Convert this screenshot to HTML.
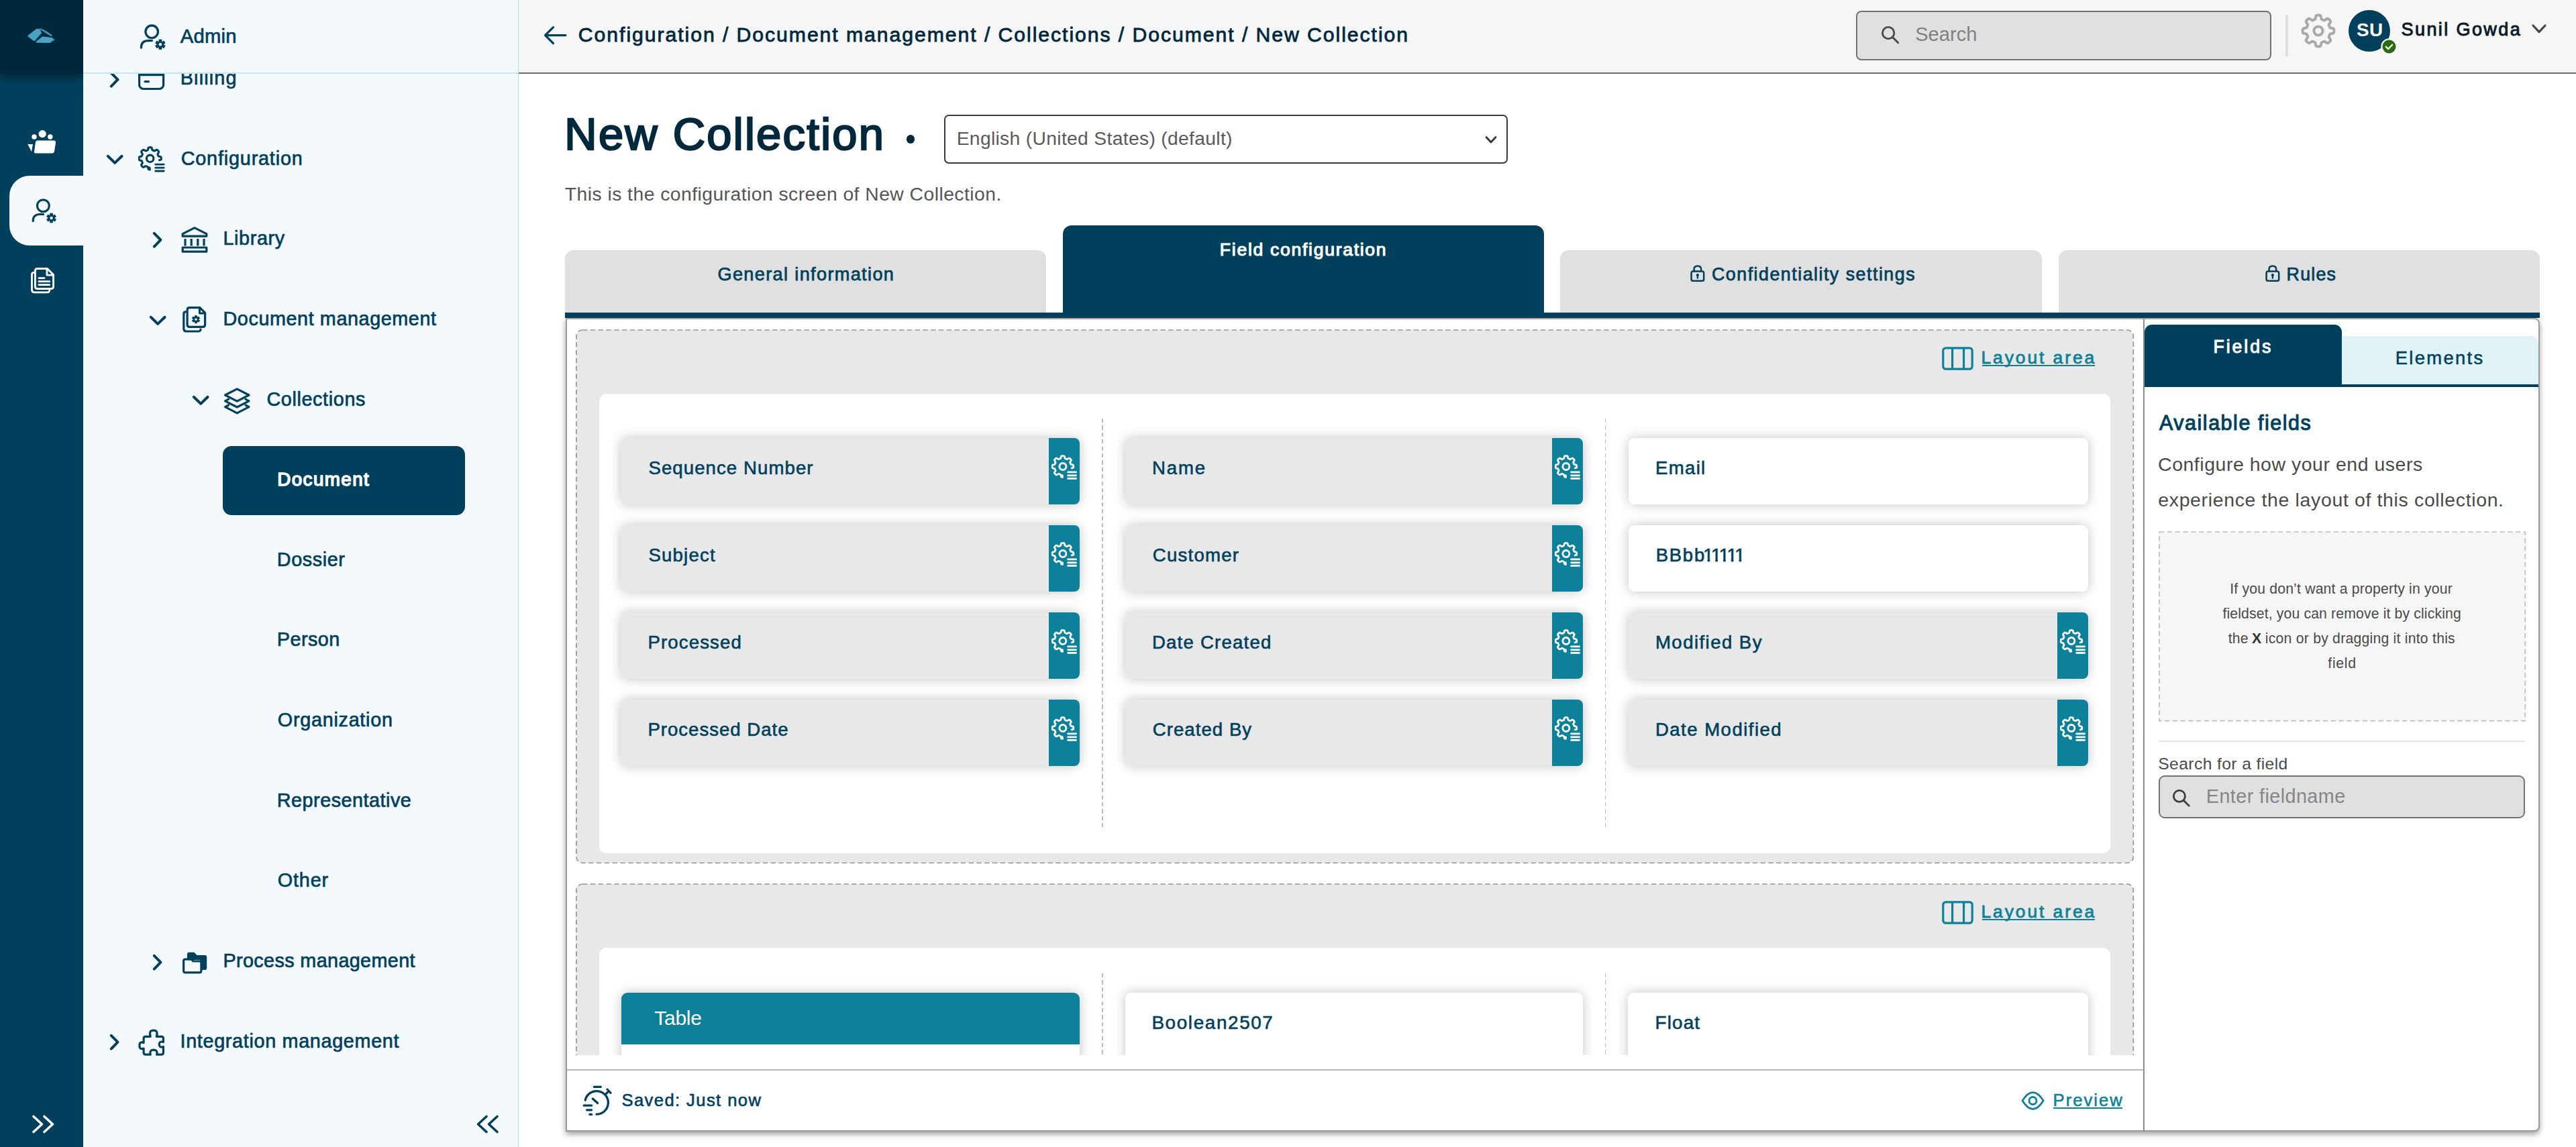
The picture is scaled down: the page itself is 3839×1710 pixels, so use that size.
<!DOCTYPE html>
<html lang="en"><head><meta charset="utf-8"><title>New Collection - Field configuration</title>
<style>
html,body{margin:0;padding:0;background:#fff;}
body{width:3839px;height:1710px;position:relative;overflow:hidden;font-family:"Liberation Sans",sans-serif;}
body div,body svg,body span.t{position:absolute;box-sizing:border-box;}
aside,nav,header,main,section{display:block;margin:0;padding:0;}
span.t{white-space:pre;display:block;}
</style></head><body>
<aside aria-label="Applications">
<div style="left:0px;top:0px;width:124px;height:1710px;background:#00405c;"></div>
<div style="left:0px;top:0px;width:124px;height:110px;background:#00283c;box-shadow:0 4px 14px rgba(0,0,0,.5);"></div>
<svg style="left:38px;top:38px;" width="48" height="30" viewBox="38 38 48 30" fill="none"><path d="M43.6,53.8 L55.9,44.4 L59.4,44.9 L61.2,49 L51.5,60 Z" fill="#317d9a" stroke="#317d9a" stroke-width="2.4" stroke-linejoin="round"/><path d="M42.6,53.6 L54.9,44 L58.2,44.5 L59.8,48.8 L50.3,59.6 Z" fill="#4aa3c3" stroke="#4aa3c3" stroke-width="2.4" stroke-linejoin="round"/><path d="M55.6,62.8 L64.4,55.6 L78,57.4 L80.6,59 L75,63 Z" fill="#317d9a" stroke="#317d9a" stroke-width="2" stroke-linejoin="round"/><path d="M54.6,62.6 L63.8,55.4 L76.8,57 L78.6,58.8 L73.6,62.8 Z" fill="#4aa3c3" stroke="#4aa3c3" stroke-width="2" stroke-linejoin="round"/><path d="M59.1,42 Q69,45.4 78,53 Q77.2,54.6 75,53.5 Q66.5,48.8 59.7,43.6 Z" fill="#4aa3c3"/><path d="M61,44.2 Q68.5,48 76.6,53.9" stroke="#317d9a" stroke-width="0.9" fill="none"/></svg>
<div style="left:14px;top:262px;width:110px;height:104px;background:#f4f9fd;border-radius:30px 0 0 30px;"></div>
<svg style="left:40px;top:192px;" width="46" height="40" viewBox="0 0 46 40" fill="none"><circle cx="23.2" cy="7.6" r="5.6" fill="#fff"/><circle cx="11" cy="12" r="3.7" fill="#fff"/><circle cx="34.8" cy="12" r="3.7" fill="#fff"/><path d="M15,17.5 H40 Q43.5,17.5 43,21 L41,33.5 Q40.5,36.5 37.5,36.5 H13 Q10.5,36.5 11,34 L13,20 Q13.5,17.5 15,17.5Z" fill="#fff"/><path d="M1.2,23 H9 L7,34 Z" fill="#fff"/></svg>
<svg style="left:45px;top:294.2px;" width="40.3" height="40.3" viewBox="0 0 42 42" fill="none"><circle cx="20.2" cy="13.3" r="9.3" stroke="#00405c" stroke-width="3.3"/><path d="M4.4,37 C4.4,30 8.2,26.6 15,26.6 L20.5,26.6" stroke="#00405c" stroke-width="3.3" stroke-linecap="round"/><line x1="32.90" y1="24.70" x2="32.90" y2="39.90" stroke="#00405c" stroke-width="4.71"/><line x1="39.48" y1="28.50" x2="26.32" y2="36.10" stroke="#00405c" stroke-width="4.71"/><line x1="39.48" y1="36.10" x2="26.32" y2="28.50" stroke="#00405c" stroke-width="4.71"/><circle cx="32.9" cy="32.3" r="5.17" fill="#00405c"/><circle cx="32.9" cy="32.3" r="2.28" fill="#f4f9fd"/></svg>
<svg style="left:43.8px;top:397.4px;" width="40.4" height="42.3" viewBox="0 0 42 44" fill="none"><path d="M12,3.6 H27.5 L37,13 V31.5 Q37,34.8 33.7,34.8 H12 Q8.7,34.8 8.7,31.5 V7 Q8.7,3.6 12,3.6Z" stroke="#fff" stroke-width="3"/><path d="M27,4.2 V13.6 H36.4" stroke="#fff" stroke-width="3" stroke-linejoin="round"/><path d="M6.4,9.6 Q3.6,9.8 3.6,13 V36.5 Q3.6,40.4 7.5,40.4 H27.6 Q30.6,40.4 30.9,37.4" stroke="#fff" stroke-width="3" stroke-linecap="round"/><path d="M14.5,18.3 H23 M14.5,23.6 H31 M14.5,28.8 H31" stroke="#fff" stroke-width="2.8" stroke-linecap="round"/></svg>
<svg style="left:44.8px;top:1659.6px;" width="40" height="32" viewBox="0 0 40 32" fill="none"><path d="M5,4.5 L17.5,16 L5,27.5 M21,4.5 L33.5,16 L21,27.5" stroke="#fff" stroke-width="3.6" stroke-linecap="round" stroke-linejoin="round"/></svg>
</aside>
<nav aria-label="Admin">
<div style="left:124px;top:0px;width:648.6px;height:1710px;background:#f4f9fd;border-right:1.7px solid #cad3d9;"></div>
<div style="left:124px;top:110px;width:648px;height:1600px;overflow:hidden;"><div style="left:-124px;top:-110px;width:900px;height:1710px;">
<svg style="left:161.4px;top:103.975px;" width="19.8" height="29.4" viewBox="-3 -3 19.8 29.4" fill="none"><path d="M1.8,1.8 L11.46,11.7 L1.8,21.599999999999998" stroke="#00405c" stroke-width="4.0" stroke-linecap="round" stroke-linejoin="round"/></svg>
<svg style="left:204px;top:101.375px;" width="44" height="36" viewBox="0 0 44 36" fill="none"><rect x="3.6" y="2" width="36" height="29.5" rx="6" stroke="#00405c" stroke-width="3.2"/><path d="M3.6,10.6 H39.6" stroke="#00405c" stroke-width="3.2"/><path d="M12,20.6 H17.5" stroke="#00405c" stroke-width="3.2" stroke-linecap="round"/></svg>
<span class="t" style="left:268.79px;top:100px;font-size:28.78px;line-height:32px;color:#00405c;letter-spacing:1.156px;-webkit-text-stroke:0.7px #00405c;">Billing</span>
<svg style="left:155.8px;top:227.8px;" width="30.4" height="20.2" viewBox="-3 -3 30.4 20.2" fill="none"><path d="M1.8,1.8 L12.2,11.86 L22.599999999999998,1.8" stroke="#00405c" stroke-width="4.0" stroke-linecap="round" stroke-linejoin="round"/></svg>
<svg style="left:206px;top:217.6px;" width="41.8" height="41.8" viewBox="0 0 40 40" fill="none"><path d="M16.21,30.58 L16.62,33.40 L15.93,33.35 L15.25,33.22 L14.61,32.80 L14.18,31.50 L13.89,30.03 L13.48,29.44 L12.99,29.19 L12.49,28.99 L11.99,28.78 L11.50,28.57 L10.99,28.39 L10.34,28.42 L9.21,29.12 L7.90,29.89 L7.08,29.85 L6.48,29.48 L5.96,29.03 L5.46,28.54 L5.00,28.02 L4.61,27.45 L4.47,26.70 L5.07,25.48 L5.91,24.23 L6.04,23.52 L5.87,23.00 L5.66,22.50 L5.45,22.01 L5.25,21.51 L5.02,21.02 L4.54,20.58 L3.24,20.28 L1.78,19.90 L1.22,19.29 L1.06,18.61 L1.01,17.92 L1.00,17.22 L1.05,16.53 L1.18,15.85 L1.60,15.21 L2.90,14.78 L4.37,14.49 L4.96,14.08 L5.21,13.59 L5.41,13.09 L5.62,12.59 L5.83,12.10 L6.01,11.59 L5.98,10.94 L5.28,9.81 L4.51,8.50 L4.55,7.68 L4.92,7.08 L5.37,6.56 L5.86,6.06 L6.38,5.60 L6.95,5.21 L7.70,5.07 L8.92,5.67 L10.17,6.51 L10.88,6.64 L11.40,6.47 L11.90,6.26 L12.39,6.05 L12.89,5.85 L13.38,5.62 L13.82,5.14 L14.12,3.84 L14.50,2.38 L15.11,1.82 L15.79,1.66 L16.48,1.61 L17.18,1.60 L17.87,1.65 L18.55,1.78 L19.19,2.20 L19.62,3.50 L19.91,4.97 L20.32,5.56 L20.81,5.81 L21.31,6.01 L21.81,6.22 L22.30,6.43 L22.81,6.61 L23.46,6.58 L24.59,5.88 L25.90,5.11 L26.72,5.15 L27.32,5.52 L27.84,5.97 L28.34,6.46 L28.80,6.98 L29.19,7.55 L29.33,8.30 L28.73,9.52 L27.89,10.77 L27.76,11.48 L27.93,12.00 L28.14,12.50 L28.35,12.99 L28.55,13.49 L28.78,13.98 L29.26,14.42 L30.56,14.72 L32.02,15.10 L32.58,15.71 L32.74,16.39 L32.79,17.08 L32.80,17.78 L32.75,18.47 L32.62,19.15 L30.19,19.84" stroke="#00405c" stroke-width="3.0" stroke-linejoin="round" stroke-linecap="round"/><circle cx="16.9" cy="17.5" r="5" stroke="#00405c" stroke-width="3.0"/><path d="M24.6,25.9H36.6 M24.6,30.8H36.6 M24.6,35.4H36.6" stroke="#00405c" stroke-width="2.7" stroke-linecap="round"/></svg>
<span class="t" style="left:269.69px;top:220px;font-size:28.78px;line-height:32px;color:#00405c;letter-spacing:0.829px;-webkit-text-stroke:0.7px #00405c;">Configuration</span>
<svg style="left:225.3px;top:343.2px;" width="19.8" height="29.4" viewBox="-3 -3 19.8 29.4" fill="none"><path d="M1.8,1.8 L11.46,11.7 L1.8,21.599999999999998" stroke="#00405c" stroke-width="4.0" stroke-linecap="round" stroke-linejoin="round"/></svg>
<svg style="left:269px;top:337px;" width="42" height="41" viewBox="0 0 42 41" fill="none"><path d="M3.2,15.2 V11.6 L21,2.6 L38.8,11.6 V15.2 Z" stroke="#00405c" stroke-width="3.2" stroke-linejoin="round"/><path d="M7,19 V29.5 M16.2,19 V29.5 M25.8,19 V29.5 M35,19 V29.5" stroke="#00405c" stroke-width="3.2"/><rect x="3.2" y="32" width="35.6" height="6.2" stroke="#00405c" stroke-width="3.2" stroke-linejoin="round"/></svg>
<span class="t" style="left:332.49px;top:339px;font-size:28.78px;line-height:32px;color:#00405c;letter-spacing:0.625px;-webkit-text-stroke:0.7px #00405c;">Library</span>
<svg style="left:219.6px;top:467.6px;" width="30.4" height="20.2" viewBox="-3 -3 30.4 20.2" fill="none"><path d="M1.8,1.8 L12.2,11.86 L22.599999999999998,1.8" stroke="#00405c" stroke-width="4.0" stroke-linecap="round" stroke-linejoin="round"/></svg>
<svg style="left:270px;top:455px;" width="40" height="43" viewBox="0 0 40 43" fill="none"><path d="M12.5,3.6 H27.8 L35.6,11.4 V29 Q35.6,32.4 32.2,32.4 H12.5 Q9.1,32.4 9.1,29 V7 Q9.1,3.6 12.5,3.6Z" stroke="#00405c" stroke-width="3.2"/><path d="M27.4,4 V12 H35.2" stroke="#00405c" stroke-width="3" stroke-linejoin="round"/><path d="M6.4,9.8 Q3.8,10 3.8,13 V35 Q3.8,39 7.8,39 H25.6 Q28.8,39 29,36" stroke="#00405c" stroke-width="3.2" stroke-linecap="round"/><line x1="22.00" y1="15.20" x2="22.00" y2="27.20" stroke="#00405c" stroke-width="3.72"/><line x1="27.20" y1="18.20" x2="16.80" y2="24.20" stroke="#00405c" stroke-width="3.72"/><line x1="27.20" y1="24.20" x2="16.80" y2="18.20" stroke="#00405c" stroke-width="3.72"/><circle cx="22" cy="21.2" r="4.08" fill="#00405c"/><circle cx="22" cy="21.2" r="1.80" fill="#f4f9fd"/></svg>
<span class="t" style="left:332.49px;top:459px;font-size:28.78px;line-height:32px;color:#00405c;letter-spacing:0.585px;-webkit-text-stroke:0.7px #00405c;">Document management</span>
<svg style="left:283.6px;top:587.2px;" width="30.4" height="20.2" viewBox="-3 -3 30.4 20.2" fill="none"><path d="M1.8,1.8 L12.2,11.86 L22.599999999999998,1.8" stroke="#00405c" stroke-width="4.0" stroke-linecap="round" stroke-linejoin="round"/></svg>
<svg style="left:332px;top:576px;" width="43" height="43" viewBox="0 0 43 43" fill="none"><path d="M3.5,13 L21.3,3.8 L39,13 L21.3,22.2 Z" stroke="#00405c" stroke-width="3.2" stroke-linejoin="round"/><path d="M8.5,19.2 L3.5,21.8 L21.3,31 L39,21.8 L34,19.2" stroke="#00405c" stroke-width="3.2" stroke-linejoin="round" stroke-linecap="round"/><path d="M8.5,28 L3.5,30.6 L21.3,39.8 L39,30.6 L34,28" stroke="#00405c" stroke-width="3.2" stroke-linejoin="round" stroke-linecap="round"/></svg>
<span class="t" style="left:397.39px;top:579px;font-size:28.78px;line-height:32px;color:#00405c;letter-spacing:0.634px;-webkit-text-stroke:0.7px #00405c;">Collections</span>
<div style="left:332px;top:665px;width:360.5px;height:102.5px;background:#00405c;border-radius:13px;"></div>
<span class="t" style="left:413.27px;top:699px;font-size:27.76px;line-height:31px;color:#fff;letter-spacing:1.422px;-webkit-text-stroke:1.5px #fff;">Document</span>
<span class="t" style="left:412.79px;top:818px;font-size:28.78px;line-height:32px;color:#00405c;letter-spacing:0.598px;-webkit-text-stroke:0.7px #00405c;">Dossier</span>
<span class="t" style="left:412.79px;top:937px;font-size:28.78px;line-height:32px;color:#00405c;letter-spacing:0.469px;-webkit-text-stroke:0.7px #00405c;">Person</span>
<span class="t" style="left:413.79px;top:1057px;font-size:28.78px;line-height:32px;color:#00405c;letter-spacing:0.732px;-webkit-text-stroke:0.7px #00405c;">Organization</span>
<span class="t" style="left:412.79px;top:1177px;font-size:28.78px;line-height:32px;color:#00405c;letter-spacing:0.505px;-webkit-text-stroke:0.7px #00405c;">Representative</span>
<span class="t" style="left:413.79px;top:1296px;font-size:28.78px;line-height:32px;color:#00405c;letter-spacing:0.841px;-webkit-text-stroke:0.7px #00405c;">Other</span>
<svg style="left:225.3px;top:1419.85px;" width="19.8" height="29.4" viewBox="-3 -3 19.8 29.4" fill="none"><path d="M1.8,1.8 L11.46,11.7 L1.8,21.599999999999998" stroke="#00405c" stroke-width="4.0" stroke-linecap="round" stroke-linejoin="round"/></svg>
<svg style="left:271.75px;top:1419.25px;" width="38" height="34" viewBox="0 0 38 34" fill="none"><path d="M7,3.4 Q7,0.8 9.6,0.8 H17.4 L21.4,5 H33.4 Q36.2,5 36.2,7.8 V24 Q36.2,26.9 33.4,26.9 H26 V12 H7 Z" fill="#00405c"/><path d="M4.2,11.2 H13 L16,14 H25.4 Q27.9,14 27.9,16.5 V28.4 Q27.9,30.9 25.4,30.9 H4.1 Q1.6,30.9 1.6,28.4 V13.7 Q1.6,11.2 4.1,11.2Z" fill="#f4f9fd" stroke="#00405c" stroke-width="3.2" stroke-linejoin="round"/></svg>
<span class="t" style="left:332.49px;top:1416px;font-size:28.78px;line-height:32px;color:#00405c;letter-spacing:0.367px;-webkit-text-stroke:0.7px #00405c;">Process management</span>
<svg style="left:161.4px;top:1539.475px;" width="19.8" height="29.4" viewBox="-3 -3 19.8 29.4" fill="none"><path d="M1.8,1.8 L11.46,11.7 L1.8,21.599999999999998" stroke="#00405c" stroke-width="4.0" stroke-linecap="round" stroke-linejoin="round"/></svg>
<svg style="left:204px;top:1533px;" width="44" height="44" viewBox="0 0 44 44" fill="none"><path d="M13,12.35 H20.2 Q17.4,3.1 24.75,3.1 Q32.1,3.1 29.3,12.35 H36.6 Q39.4,12.35 39.4,15.2 V20.6 Q33.4,18.4 33.2,24 Q33.4,29.6 39.4,27.4 V36.3 Q39.4,39.15 36.6,39.15 H29.6 Q31.6,32.4 24.9,32.2 Q18.2,32.4 20.2,39.15 H13 Q10.1,39.15 10.1,36.3 V30 Q3.85,32.4 3.85,25.8 Q3.85,19.2 10.1,21.6 V15.2 Q10.1,12.35 13,12.35Z" stroke="#00405c" stroke-width="3.2" stroke-linejoin="round"/></svg>
<span class="t" style="left:268.49px;top:1536px;font-size:28.78px;line-height:32px;color:#00405c;letter-spacing:0.676px;-webkit-text-stroke:0.7px #00405c;">Integration management</span>
<svg style="left:705.6px;top:1659.6px;" width="40" height="32" viewBox="0 0 40 32" fill="none"><path d="M19,4.5 L6.5,16 L19,27.5 M35,4.5 L22.5,16 L35,27.5" stroke="#00405c" stroke-width="3.6" stroke-linecap="round" stroke-linejoin="round"/></svg>
</div></div>
<div style="left:124px;top:108px;width:648px;height:2px;background:#c4e7ee;"></div>
<svg style="left:205.6px;top:34px;" width="42" height="42" viewBox="0 0 42 42" fill="none"><circle cx="20.2" cy="13.3" r="9.3" stroke="#00405c" stroke-width="3.3"/><path d="M4.4,37 C4.4,30 8.2,26.6 15,26.6 L20.5,26.6" stroke="#00405c" stroke-width="3.3" stroke-linecap="round"/><line x1="32.90" y1="24.70" x2="32.90" y2="39.90" stroke="#00405c" stroke-width="4.71"/><line x1="39.48" y1="28.50" x2="26.32" y2="36.10" stroke="#00405c" stroke-width="4.71"/><line x1="39.48" y1="36.10" x2="26.32" y2="28.50" stroke="#00405c" stroke-width="4.71"/><circle cx="32.9" cy="32.3" r="5.17" fill="#00405c"/><circle cx="32.9" cy="32.3" r="2.28" fill="#f4f9fd"/></svg>
<span class="t" style="left:268.79px;top:38px;font-size:29.22px;line-height:32px;color:#00405c;letter-spacing:0.236px;-webkit-text-stroke:0.7px #00405c;">Admin</span>
</nav>
<header>
<div style="left:772.6px;top:0px;width:3067px;height:110px;background:#f6f6f6;border-bottom:2px solid #6e6e6e;"></div>
<svg style="left:808px;top:36px;" width="40" height="34" viewBox="0 0 40 34" fill="none"><path d="M4.5,16.6 H35 M16.5,4.6 L4.5,16.6 L16.5,28.6" stroke="#00405c" stroke-width="3.2" stroke-linecap="round" stroke-linejoin="round"/></svg>
<span class="t" style="left:861.86px;top:35px;font-size:30.23px;line-height:33px;color:#00283d;letter-spacing:1.923px;-webkit-text-stroke:0.8px #00283d;">Configuration / Document management / Collections / Document / New Collection</span>
<div style="left:2766px;top:16px;width:618.5px;height:73.5px;background:#e0e0e0;border:2px solid #727272;border-radius:8px;"></div>
<svg style="left:2802.6px;top:38.4px;" width="27.6" height="27.6" viewBox="0 0 26 26" fill="none"><circle cx="10.5" cy="10.5" r="8.2" stroke="#4a4a4a" stroke-width="2.7"/><path d="M16.6,16.6 L24.3,24.3" stroke="#4a4a4a" stroke-width="2.7" stroke-linecap="round"/></svg>
<span class="t" style="left:2854.18px;top:35px;font-size:29.07px;line-height:32px;color:#808080;letter-spacing:0.020px;">Search</span>
<div style="left:3406px;top:22px;width:4px;height:62px;background:#dcdcdc;"></div>
<svg style="left:3429px;top:20px;" width="52" height="52" viewBox="0 0 52 52" fill="none"><path d="M49.40,26.00 L49.37,27.02 L49.24,28.03 L48.84,29.01 L47.47,29.79 L44.94,30.20 L43.54,30.70 L43.05,31.37 L42.74,32.09 L42.45,32.81 L42.14,33.53 L41.85,34.25 L41.73,35.08 L42.36,36.42 L43.86,38.50 L44.28,40.03 L43.87,40.99 L43.24,41.80 L42.55,42.55 L41.80,43.24 L40.99,43.87 L40.03,44.28 L38.50,43.86 L36.42,42.36 L35.08,41.73 L34.25,41.85 L33.53,42.14 L32.81,42.45 L32.09,42.74 L31.37,43.05 L30.70,43.54 L30.20,44.94 L29.79,47.47 L29.01,48.84 L28.03,49.24 L27.02,49.37 L26.00,49.40 L24.98,49.37 L23.97,49.24 L22.99,48.84 L22.21,47.47 L21.80,44.94 L21.30,43.54 L20.63,43.05 L19.91,42.74 L19.19,42.45 L18.47,42.14 L17.75,41.85 L16.92,41.73 L15.58,42.36 L13.50,43.86 L11.97,44.28 L11.01,43.87 L10.20,43.24 L9.45,42.55 L8.76,41.80 L8.13,40.99 L7.72,40.03 L8.14,38.50 L9.64,36.42 L10.27,35.08 L10.15,34.25 L9.86,33.53 L9.55,32.81 L9.26,32.09 L8.95,31.37 L8.46,30.70 L7.06,30.20 L4.53,29.79 L3.16,29.01 L2.76,28.03 L2.63,27.02 L2.60,26.00 L2.63,24.98 L2.76,23.97 L3.16,22.99 L4.53,22.21 L7.06,21.80 L8.46,21.30 L8.95,20.63 L9.26,19.91 L9.55,19.19 L9.86,18.47 L10.15,17.75 L10.27,16.92 L9.64,15.58 L8.14,13.50 L7.72,11.97 L8.13,11.01 L8.76,10.20 L9.45,9.45 L10.20,8.76 L11.01,8.13 L11.97,7.72 L13.50,8.14 L15.58,9.64 L16.92,10.27 L17.75,10.15 L18.47,9.86 L19.19,9.55 L19.91,9.26 L20.63,8.95 L21.30,8.46 L21.80,7.06 L22.21,4.53 L22.99,3.16 L23.97,2.76 L24.98,2.63 L26.00,2.60 L27.02,2.63 L28.03,2.76 L29.01,3.16 L29.79,4.53 L30.20,7.06 L30.70,8.46 L31.37,8.95 L32.09,9.26 L32.81,9.55 L33.53,9.86 L34.25,10.15 L35.08,10.27 L36.42,9.64 L38.50,8.14 L40.03,7.72 L40.99,8.13 L41.80,8.76 L42.55,9.45 L43.24,10.20 L43.87,11.01 L44.28,11.97 L43.86,13.50 L42.36,15.58 L41.73,16.92 L41.85,17.75 L42.14,18.47 L42.45,19.19 L42.74,19.91 L43.05,20.63 L43.54,21.30 L44.94,21.80 L47.47,22.21 L48.84,22.99 L49.24,23.97 L49.37,24.98Z" stroke="#a9a9a9" stroke-width="4" stroke-linejoin="round"/><circle cx="26" cy="26" r="6.6" stroke="#a9a9a9" stroke-width="4"/></svg>
<div style="left:3499.8px;top:14.6px;width:62.2px;height:62.2px;background:#00405c;border-radius:50%;"></div>
<span class="t" style="left:3512.10px;top:29px;font-size:27.91px;line-height:31px;color:#fff;font-weight:700;letter-spacing:0.340px;">SU</span>
<svg style="left:3547px;top:56px;" width="27" height="27" viewBox="0 0 27 27" fill="none"><circle cx="13.5" cy="13.5" r="12.2" fill="#f6f6f6"/><circle cx="13.5" cy="13.5" r="10" fill="#2b6a0e"/><path d="M8.8,13.6 L12.2,17 L18.2,10.8" stroke="#fff" stroke-width="2.3" stroke-linecap="round" stroke-linejoin="round"/></svg>
<span class="t" style="left:3578.54px;top:28px;font-size:27.11px;line-height:31px;color:#0b1b26;letter-spacing:2.358px;-webkit-text-stroke:0.95px #0b1b26;">Sunil Gowda</span>
<svg style="left:3771px;top:33px;" width="26" height="22" viewBox="0 0 26 22" fill="none"><path d="M4,5 L13,14.6 L22,5" stroke="#444" stroke-width="3.2" stroke-linecap="round" stroke-linejoin="round"/></svg>
</header>
<main>
<span class="t" style="left:841.32px;top:162px;font-size:66.86px;line-height:75px;color:#00283d;letter-spacing:2.285px;-webkit-text-stroke:2.4px #00283d;">New Collection</span>
<div style="left:1350.5px;top:201.2px;width:12.6px;height:12.6px;background:#00283d;border-radius:50%;"></div>
<div style="left:1407.2px;top:171.2px;width:840.3px;height:73.2px;background:#fff;border:2px solid #3a3a3a;border-radius:7px;"></div>
<span class="t" style="left:1425.67px;top:190px;font-size:28.34px;line-height:32px;color:#5a5a5a;letter-spacing:0.293px;">English (United States) (default)</span>
<svg style="left:2210px;top:200px;" width="24" height="18" viewBox="0 0 24 18" fill="none"><path d="M5,4.5 L12,12 L19,4.5" stroke="#333" stroke-width="2.8" stroke-linecap="round" stroke-linejoin="round"/></svg>
<span class="t" style="left:841.86px;top:273px;font-size:28.34px;line-height:32px;color:#555;letter-spacing:0.443px;">This is the configuration screen of New Collection.</span>
<div style="left:842px;top:372.5px;width:717px;height:94px;background:#e0e0e0;border-radius:13px 13px 0 0;"></div>
<div style="left:2325px;top:372.5px;width:717.5px;height:94px;background:#e0e0e0;border-radius:13px 13px 0 0;"></div>
<div style="left:3067.5px;top:372.5px;width:717.5px;height:94px;background:#e0e0e0;border-radius:13px 13px 0 0;"></div>
<div style="left:1584px;top:336px;width:716.5px;height:132px;background:#00405c;border-radius:13px 13px 0 0;"></div>
<div style="left:842px;top:465.6px;width:2943px;height:8.4px;background:#00405c;"></div>
<span class="t" style="left:1069.51px;top:393px;font-size:27.11px;line-height:31px;color:#00405c;letter-spacing:1.350px;-webkit-text-stroke:0.75px #00405c;">General information</span>
<span class="t" style="left:1817.87px;top:357px;font-size:26.60px;line-height:30px;color:#fff;letter-spacing:1.692px;-webkit-text-stroke:1.1px #fff;">Field configuration</span>
<svg style="left:2517.6px;top:393.6px;" width="24" height="27" viewBox="0 0 24 27" fill="none"><rect x="2.6" y="10.4" width="18.6" height="14.4" rx="2.6" stroke="#00405c" stroke-width="2.5"/><path d="M6.6,10.2 V7.4 Q6.6,2.4 11.9,2.4 Q17.2,2.4 17.2,7.4 V10.2" stroke="#00405c" stroke-width="2.5"/><circle cx="11.9" cy="16" r="2.1" fill="#00405c"/><path d="M11.9,16 V20.6" stroke="#00405c" stroke-width="2.4" stroke-linecap="round"/></svg>
<span class="t" style="left:2551.01px;top:394px;font-size:26.82px;line-height:30px;color:#00405c;letter-spacing:1.490px;-webkit-text-stroke:0.75px #00405c;">Confidentiality settings</span>
<svg style="left:3375.2px;top:393.6px;" width="24" height="27" viewBox="0 0 24 27" fill="none"><rect x="2.6" y="10.4" width="18.6" height="14.4" rx="2.6" stroke="#00405c" stroke-width="2.5"/><path d="M6.6,10.2 V7.4 Q6.6,2.4 11.9,2.4 Q17.2,2.4 17.2,7.4 V10.2" stroke="#00405c" stroke-width="2.5"/><circle cx="11.9" cy="16" r="2.1" fill="#00405c"/><path d="M11.9,16 V20.6" stroke="#00405c" stroke-width="2.4" stroke-linecap="round"/></svg>
<span class="t" style="left:3407.58px;top:394px;font-size:26.82px;line-height:30px;color:#00405c;letter-spacing:1.214px;-webkit-text-stroke:0.75px #00405c;">Rules</span>
<div style="left:843px;top:474px;width:2942px;height:1213.3px;background:#fff;border:2px solid #9a9a9a;border-top:2px solid #a0a0a0;border-radius:0 8px 8px 0;box-shadow:0 4px 9px rgba(0,0,0,.38);"></div>
<div style="left:845px;top:476px;width:2349px;height:1096.5px;overflow:hidden;"><div style="left:-845px;top:-476px;width:3839px;height:2400px;">
<svg style="left:856.5px;top:489.5px;" width="2324.3" height="798.5" viewBox="-2 -2 2324.3 798.5" fill="none"><rect x="0" y="0" width="2320.3" height="794.5" rx="9" fill="#e8e8e8" stroke="#959595" stroke-width="1.7" stroke-dasharray="7.4 4.4"/></svg>
<div style="left:893px;top:586.5px;width:2251.5px;height:685.5px;background:#fff;border-radius:11px;"></div>
<svg style="left:2892px;top:514.5px;" width="52" height="40" viewBox="0 0 52 40" fill="none"><rect x="3.8" y="3.8" width="43.4" height="31.4" rx="4" stroke="#0e819a" stroke-width="3.2"/><path d="M17.6,4 V35 M34.6,4 V35" stroke="#0e819a" stroke-width="3.2"/></svg>
<span class="t" style="left:2952.43px;top:518px;font-size:26.45px;line-height:30px;color:#0e819a;letter-spacing:2.915px;-webkit-text-stroke:0.8px #0e819a;">Layout area</span>
<div style="left:2954.2px;top:543.7px;width:167.8px;height:2.5px;background:#0e819a;"></div>
<div style="left:1642.25px;top:623.5px;width:1.7px;height:611px;background:repeating-linear-gradient(to bottom,#bcbcbc 0,#bcbcbc 6.2px,transparent 6.2px,transparent 10.4px);"></div>
<div style="left:2391.7500000000005px;top:623.5px;width:1.7px;height:611px;background:repeating-linear-gradient(to bottom,#bcbcbc 0,#bcbcbc 6.2px,transparent 6.2px,transparent 10.4px);"></div>
<div style="left:925px;top:653px;width:684px;height:99px;background:#e8e8e8;border-radius:9px;box-shadow:0 0 18px rgba(0,0,0,.24);"></div>
<div style="left:1563px;top:653px;width:46px;height:99px;background:#0e819a;border-radius:0 8px 8px 0;"></div>
<svg style="left:1567.2px;top:678px;" width="40.0" height="40.0" viewBox="0 0 40 40" fill="none"><path d="M16.21,30.58 L16.62,33.40 L15.93,33.35 L15.25,33.22 L14.61,32.80 L14.18,31.50 L13.89,30.03 L13.48,29.44 L12.99,29.19 L12.49,28.99 L11.99,28.78 L11.50,28.57 L10.99,28.39 L10.34,28.42 L9.21,29.12 L7.90,29.89 L7.08,29.85 L6.48,29.48 L5.96,29.03 L5.46,28.54 L5.00,28.02 L4.61,27.45 L4.47,26.70 L5.07,25.48 L5.91,24.23 L6.04,23.52 L5.87,23.00 L5.66,22.50 L5.45,22.01 L5.25,21.51 L5.02,21.02 L4.54,20.58 L3.24,20.28 L1.78,19.90 L1.22,19.29 L1.06,18.61 L1.01,17.92 L1.00,17.22 L1.05,16.53 L1.18,15.85 L1.60,15.21 L2.90,14.78 L4.37,14.49 L4.96,14.08 L5.21,13.59 L5.41,13.09 L5.62,12.59 L5.83,12.10 L6.01,11.59 L5.98,10.94 L5.28,9.81 L4.51,8.50 L4.55,7.68 L4.92,7.08 L5.37,6.56 L5.86,6.06 L6.38,5.60 L6.95,5.21 L7.70,5.07 L8.92,5.67 L10.17,6.51 L10.88,6.64 L11.40,6.47 L11.90,6.26 L12.39,6.05 L12.89,5.85 L13.38,5.62 L13.82,5.14 L14.12,3.84 L14.50,2.38 L15.11,1.82 L15.79,1.66 L16.48,1.61 L17.18,1.60 L17.87,1.65 L18.55,1.78 L19.19,2.20 L19.62,3.50 L19.91,4.97 L20.32,5.56 L20.81,5.81 L21.31,6.01 L21.81,6.22 L22.30,6.43 L22.81,6.61 L23.46,6.58 L24.59,5.88 L25.90,5.11 L26.72,5.15 L27.32,5.52 L27.84,5.97 L28.34,6.46 L28.80,6.98 L29.19,7.55 L29.33,8.30 L28.73,9.52 L27.89,10.77 L27.76,11.48 L27.93,12.00 L28.14,12.50 L28.35,12.99 L28.55,13.49 L28.78,13.98 L29.26,14.42 L30.56,14.72 L32.02,15.10 L32.58,15.71 L32.74,16.39 L32.79,17.08 L32.80,17.78 L32.75,18.47 L32.62,19.15 L30.19,19.84" stroke="#fff" stroke-width="2.8" stroke-linejoin="round" stroke-linecap="round"/><circle cx="16.9" cy="17.5" r="5" stroke="#fff" stroke-width="2.8"/><path d="M24.6,25.9H36.6 M24.6,30.8H36.6 M24.6,35.4H36.6" stroke="#fff" stroke-width="2.7" stroke-linecap="round"/></svg>
<span class="t" style="left:966.45px;top:682px;font-size:27.62px;line-height:31px;color:#00405c;letter-spacing:1.060px;-webkit-text-stroke:0.6px #00405c;">Sequence Number</span>
<div style="left:925px;top:783px;width:684px;height:99px;background:#e8e8e8;border-radius:9px;box-shadow:0 0 18px rgba(0,0,0,.24);"></div>
<div style="left:1563px;top:783px;width:46px;height:99px;background:#0e819a;border-radius:0 8px 8px 0;"></div>
<svg style="left:1567.2px;top:808px;" width="40.0" height="40.0" viewBox="0 0 40 40" fill="none"><path d="M16.21,30.58 L16.62,33.40 L15.93,33.35 L15.25,33.22 L14.61,32.80 L14.18,31.50 L13.89,30.03 L13.48,29.44 L12.99,29.19 L12.49,28.99 L11.99,28.78 L11.50,28.57 L10.99,28.39 L10.34,28.42 L9.21,29.12 L7.90,29.89 L7.08,29.85 L6.48,29.48 L5.96,29.03 L5.46,28.54 L5.00,28.02 L4.61,27.45 L4.47,26.70 L5.07,25.48 L5.91,24.23 L6.04,23.52 L5.87,23.00 L5.66,22.50 L5.45,22.01 L5.25,21.51 L5.02,21.02 L4.54,20.58 L3.24,20.28 L1.78,19.90 L1.22,19.29 L1.06,18.61 L1.01,17.92 L1.00,17.22 L1.05,16.53 L1.18,15.85 L1.60,15.21 L2.90,14.78 L4.37,14.49 L4.96,14.08 L5.21,13.59 L5.41,13.09 L5.62,12.59 L5.83,12.10 L6.01,11.59 L5.98,10.94 L5.28,9.81 L4.51,8.50 L4.55,7.68 L4.92,7.08 L5.37,6.56 L5.86,6.06 L6.38,5.60 L6.95,5.21 L7.70,5.07 L8.92,5.67 L10.17,6.51 L10.88,6.64 L11.40,6.47 L11.90,6.26 L12.39,6.05 L12.89,5.85 L13.38,5.62 L13.82,5.14 L14.12,3.84 L14.50,2.38 L15.11,1.82 L15.79,1.66 L16.48,1.61 L17.18,1.60 L17.87,1.65 L18.55,1.78 L19.19,2.20 L19.62,3.50 L19.91,4.97 L20.32,5.56 L20.81,5.81 L21.31,6.01 L21.81,6.22 L22.30,6.43 L22.81,6.61 L23.46,6.58 L24.59,5.88 L25.90,5.11 L26.72,5.15 L27.32,5.52 L27.84,5.97 L28.34,6.46 L28.80,6.98 L29.19,7.55 L29.33,8.30 L28.73,9.52 L27.89,10.77 L27.76,11.48 L27.93,12.00 L28.14,12.50 L28.35,12.99 L28.55,13.49 L28.78,13.98 L29.26,14.42 L30.56,14.72 L32.02,15.10 L32.58,15.71 L32.74,16.39 L32.79,17.08 L32.80,17.78 L32.75,18.47 L32.62,19.15 L30.19,19.84" stroke="#fff" stroke-width="2.8" stroke-linejoin="round" stroke-linecap="round"/><circle cx="16.9" cy="17.5" r="5" stroke="#fff" stroke-width="2.8"/><path d="M24.6,25.9H36.6 M24.6,30.8H36.6 M24.6,35.4H36.6" stroke="#fff" stroke-width="2.7" stroke-linecap="round"/></svg>
<span class="t" style="left:966.45px;top:812px;font-size:27.62px;line-height:31px;color:#00405c;letter-spacing:1.174px;-webkit-text-stroke:0.6px #00405c;">Subject</span>
<div style="left:925px;top:913px;width:684px;height:99px;background:#e8e8e8;border-radius:9px;box-shadow:0 0 18px rgba(0,0,0,.24);"></div>
<div style="left:1563px;top:913px;width:46px;height:99px;background:#0e819a;border-radius:0 8px 8px 0;"></div>
<svg style="left:1567.2px;top:938px;" width="40.0" height="40.0" viewBox="0 0 40 40" fill="none"><path d="M16.21,30.58 L16.62,33.40 L15.93,33.35 L15.25,33.22 L14.61,32.80 L14.18,31.50 L13.89,30.03 L13.48,29.44 L12.99,29.19 L12.49,28.99 L11.99,28.78 L11.50,28.57 L10.99,28.39 L10.34,28.42 L9.21,29.12 L7.90,29.89 L7.08,29.85 L6.48,29.48 L5.96,29.03 L5.46,28.54 L5.00,28.02 L4.61,27.45 L4.47,26.70 L5.07,25.48 L5.91,24.23 L6.04,23.52 L5.87,23.00 L5.66,22.50 L5.45,22.01 L5.25,21.51 L5.02,21.02 L4.54,20.58 L3.24,20.28 L1.78,19.90 L1.22,19.29 L1.06,18.61 L1.01,17.92 L1.00,17.22 L1.05,16.53 L1.18,15.85 L1.60,15.21 L2.90,14.78 L4.37,14.49 L4.96,14.08 L5.21,13.59 L5.41,13.09 L5.62,12.59 L5.83,12.10 L6.01,11.59 L5.98,10.94 L5.28,9.81 L4.51,8.50 L4.55,7.68 L4.92,7.08 L5.37,6.56 L5.86,6.06 L6.38,5.60 L6.95,5.21 L7.70,5.07 L8.92,5.67 L10.17,6.51 L10.88,6.64 L11.40,6.47 L11.90,6.26 L12.39,6.05 L12.89,5.85 L13.38,5.62 L13.82,5.14 L14.12,3.84 L14.50,2.38 L15.11,1.82 L15.79,1.66 L16.48,1.61 L17.18,1.60 L17.87,1.65 L18.55,1.78 L19.19,2.20 L19.62,3.50 L19.91,4.97 L20.32,5.56 L20.81,5.81 L21.31,6.01 L21.81,6.22 L22.30,6.43 L22.81,6.61 L23.46,6.58 L24.59,5.88 L25.90,5.11 L26.72,5.15 L27.32,5.52 L27.84,5.97 L28.34,6.46 L28.80,6.98 L29.19,7.55 L29.33,8.30 L28.73,9.52 L27.89,10.77 L27.76,11.48 L27.93,12.00 L28.14,12.50 L28.35,12.99 L28.55,13.49 L28.78,13.98 L29.26,14.42 L30.56,14.72 L32.02,15.10 L32.58,15.71 L32.74,16.39 L32.79,17.08 L32.80,17.78 L32.75,18.47 L32.62,19.15 L30.19,19.84" stroke="#fff" stroke-width="2.8" stroke-linejoin="round" stroke-linecap="round"/><circle cx="16.9" cy="17.5" r="5" stroke="#fff" stroke-width="2.8"/><path d="M24.6,25.9H36.6 M24.6,30.8H36.6 M24.6,35.4H36.6" stroke="#fff" stroke-width="2.7" stroke-linecap="round"/></svg>
<span class="t" style="left:965.43px;top:942px;font-size:27.62px;line-height:31px;color:#00405c;letter-spacing:1.121px;-webkit-text-stroke:0.6px #00405c;">Processed</span>
<div style="left:925px;top:1043px;width:684px;height:99px;background:#e8e8e8;border-radius:9px;box-shadow:0 0 18px rgba(0,0,0,.24);"></div>
<div style="left:1563px;top:1043px;width:46px;height:99px;background:#0e819a;border-radius:0 8px 8px 0;"></div>
<svg style="left:1567.2px;top:1068px;" width="40.0" height="40.0" viewBox="0 0 40 40" fill="none"><path d="M16.21,30.58 L16.62,33.40 L15.93,33.35 L15.25,33.22 L14.61,32.80 L14.18,31.50 L13.89,30.03 L13.48,29.44 L12.99,29.19 L12.49,28.99 L11.99,28.78 L11.50,28.57 L10.99,28.39 L10.34,28.42 L9.21,29.12 L7.90,29.89 L7.08,29.85 L6.48,29.48 L5.96,29.03 L5.46,28.54 L5.00,28.02 L4.61,27.45 L4.47,26.70 L5.07,25.48 L5.91,24.23 L6.04,23.52 L5.87,23.00 L5.66,22.50 L5.45,22.01 L5.25,21.51 L5.02,21.02 L4.54,20.58 L3.24,20.28 L1.78,19.90 L1.22,19.29 L1.06,18.61 L1.01,17.92 L1.00,17.22 L1.05,16.53 L1.18,15.85 L1.60,15.21 L2.90,14.78 L4.37,14.49 L4.96,14.08 L5.21,13.59 L5.41,13.09 L5.62,12.59 L5.83,12.10 L6.01,11.59 L5.98,10.94 L5.28,9.81 L4.51,8.50 L4.55,7.68 L4.92,7.08 L5.37,6.56 L5.86,6.06 L6.38,5.60 L6.95,5.21 L7.70,5.07 L8.92,5.67 L10.17,6.51 L10.88,6.64 L11.40,6.47 L11.90,6.26 L12.39,6.05 L12.89,5.85 L13.38,5.62 L13.82,5.14 L14.12,3.84 L14.50,2.38 L15.11,1.82 L15.79,1.66 L16.48,1.61 L17.18,1.60 L17.87,1.65 L18.55,1.78 L19.19,2.20 L19.62,3.50 L19.91,4.97 L20.32,5.56 L20.81,5.81 L21.31,6.01 L21.81,6.22 L22.30,6.43 L22.81,6.61 L23.46,6.58 L24.59,5.88 L25.90,5.11 L26.72,5.15 L27.32,5.52 L27.84,5.97 L28.34,6.46 L28.80,6.98 L29.19,7.55 L29.33,8.30 L28.73,9.52 L27.89,10.77 L27.76,11.48 L27.93,12.00 L28.14,12.50 L28.35,12.99 L28.55,13.49 L28.78,13.98 L29.26,14.42 L30.56,14.72 L32.02,15.10 L32.58,15.71 L32.74,16.39 L32.79,17.08 L32.80,17.78 L32.75,18.47 L32.62,19.15 L30.19,19.84" stroke="#fff" stroke-width="2.8" stroke-linejoin="round" stroke-linecap="round"/><circle cx="16.9" cy="17.5" r="5" stroke="#fff" stroke-width="2.8"/><path d="M24.6,25.9H36.6 M24.6,30.8H36.6 M24.6,35.4H36.6" stroke="#fff" stroke-width="2.7" stroke-linecap="round"/></svg>
<span class="t" style="left:965.43px;top:1072px;font-size:27.62px;line-height:31px;color:#00405c;letter-spacing:0.978px;-webkit-text-stroke:0.6px #00405c;">Processed Date</span>
<div style="left:1676.5px;top:653px;width:682px;height:99px;background:#e8e8e8;border-radius:9px;box-shadow:0 0 18px rgba(0,0,0,.24);"></div>
<div style="left:2312.5px;top:653px;width:46px;height:99px;background:#0e819a;border-radius:0 8px 8px 0;"></div>
<svg style="left:2316.7px;top:678px;" width="40.0" height="40.0" viewBox="0 0 40 40" fill="none"><path d="M16.21,30.58 L16.62,33.40 L15.93,33.35 L15.25,33.22 L14.61,32.80 L14.18,31.50 L13.89,30.03 L13.48,29.44 L12.99,29.19 L12.49,28.99 L11.99,28.78 L11.50,28.57 L10.99,28.39 L10.34,28.42 L9.21,29.12 L7.90,29.89 L7.08,29.85 L6.48,29.48 L5.96,29.03 L5.46,28.54 L5.00,28.02 L4.61,27.45 L4.47,26.70 L5.07,25.48 L5.91,24.23 L6.04,23.52 L5.87,23.00 L5.66,22.50 L5.45,22.01 L5.25,21.51 L5.02,21.02 L4.54,20.58 L3.24,20.28 L1.78,19.90 L1.22,19.29 L1.06,18.61 L1.01,17.92 L1.00,17.22 L1.05,16.53 L1.18,15.85 L1.60,15.21 L2.90,14.78 L4.37,14.49 L4.96,14.08 L5.21,13.59 L5.41,13.09 L5.62,12.59 L5.83,12.10 L6.01,11.59 L5.98,10.94 L5.28,9.81 L4.51,8.50 L4.55,7.68 L4.92,7.08 L5.37,6.56 L5.86,6.06 L6.38,5.60 L6.95,5.21 L7.70,5.07 L8.92,5.67 L10.17,6.51 L10.88,6.64 L11.40,6.47 L11.90,6.26 L12.39,6.05 L12.89,5.85 L13.38,5.62 L13.82,5.14 L14.12,3.84 L14.50,2.38 L15.11,1.82 L15.79,1.66 L16.48,1.61 L17.18,1.60 L17.87,1.65 L18.55,1.78 L19.19,2.20 L19.62,3.50 L19.91,4.97 L20.32,5.56 L20.81,5.81 L21.31,6.01 L21.81,6.22 L22.30,6.43 L22.81,6.61 L23.46,6.58 L24.59,5.88 L25.90,5.11 L26.72,5.15 L27.32,5.52 L27.84,5.97 L28.34,6.46 L28.80,6.98 L29.19,7.55 L29.33,8.30 L28.73,9.52 L27.89,10.77 L27.76,11.48 L27.93,12.00 L28.14,12.50 L28.35,12.99 L28.55,13.49 L28.78,13.98 L29.26,14.42 L30.56,14.72 L32.02,15.10 L32.58,15.71 L32.74,16.39 L32.79,17.08 L32.80,17.78 L32.75,18.47 L32.62,19.15 L30.19,19.84" stroke="#fff" stroke-width="2.8" stroke-linejoin="round" stroke-linecap="round"/><circle cx="16.9" cy="17.5" r="5" stroke="#fff" stroke-width="2.8"/><path d="M24.6,25.9H36.6 M24.6,30.8H36.6 M24.6,35.4H36.6" stroke="#fff" stroke-width="2.7" stroke-linecap="round"/></svg>
<span class="t" style="left:1716.93px;top:682px;font-size:27.62px;line-height:31px;color:#00405c;letter-spacing:1.842px;-webkit-text-stroke:0.6px #00405c;">Name</span>
<div style="left:1676.5px;top:783px;width:682px;height:99px;background:#e8e8e8;border-radius:9px;box-shadow:0 0 18px rgba(0,0,0,.24);"></div>
<div style="left:2312.5px;top:783px;width:46px;height:99px;background:#0e819a;border-radius:0 8px 8px 0;"></div>
<svg style="left:2316.7px;top:808px;" width="40.0" height="40.0" viewBox="0 0 40 40" fill="none"><path d="M16.21,30.58 L16.62,33.40 L15.93,33.35 L15.25,33.22 L14.61,32.80 L14.18,31.50 L13.89,30.03 L13.48,29.44 L12.99,29.19 L12.49,28.99 L11.99,28.78 L11.50,28.57 L10.99,28.39 L10.34,28.42 L9.21,29.12 L7.90,29.89 L7.08,29.85 L6.48,29.48 L5.96,29.03 L5.46,28.54 L5.00,28.02 L4.61,27.45 L4.47,26.70 L5.07,25.48 L5.91,24.23 L6.04,23.52 L5.87,23.00 L5.66,22.50 L5.45,22.01 L5.25,21.51 L5.02,21.02 L4.54,20.58 L3.24,20.28 L1.78,19.90 L1.22,19.29 L1.06,18.61 L1.01,17.92 L1.00,17.22 L1.05,16.53 L1.18,15.85 L1.60,15.21 L2.90,14.78 L4.37,14.49 L4.96,14.08 L5.21,13.59 L5.41,13.09 L5.62,12.59 L5.83,12.10 L6.01,11.59 L5.98,10.94 L5.28,9.81 L4.51,8.50 L4.55,7.68 L4.92,7.08 L5.37,6.56 L5.86,6.06 L6.38,5.60 L6.95,5.21 L7.70,5.07 L8.92,5.67 L10.17,6.51 L10.88,6.64 L11.40,6.47 L11.90,6.26 L12.39,6.05 L12.89,5.85 L13.38,5.62 L13.82,5.14 L14.12,3.84 L14.50,2.38 L15.11,1.82 L15.79,1.66 L16.48,1.61 L17.18,1.60 L17.87,1.65 L18.55,1.78 L19.19,2.20 L19.62,3.50 L19.91,4.97 L20.32,5.56 L20.81,5.81 L21.31,6.01 L21.81,6.22 L22.30,6.43 L22.81,6.61 L23.46,6.58 L24.59,5.88 L25.90,5.11 L26.72,5.15 L27.32,5.52 L27.84,5.97 L28.34,6.46 L28.80,6.98 L29.19,7.55 L29.33,8.30 L28.73,9.52 L27.89,10.77 L27.76,11.48 L27.93,12.00 L28.14,12.50 L28.35,12.99 L28.55,13.49 L28.78,13.98 L29.26,14.42 L30.56,14.72 L32.02,15.10 L32.58,15.71 L32.74,16.39 L32.79,17.08 L32.80,17.78 L32.75,18.47 L32.62,19.15 L30.19,19.84" stroke="#fff" stroke-width="2.8" stroke-linejoin="round" stroke-linecap="round"/><circle cx="16.9" cy="17.5" r="5" stroke="#fff" stroke-width="2.8"/><path d="M24.6,25.9H36.6 M24.6,30.8H36.6 M24.6,35.4H36.6" stroke="#fff" stroke-width="2.7" stroke-linecap="round"/></svg>
<span class="t" style="left:1717.80px;top:812px;font-size:27.62px;line-height:31px;color:#00405c;letter-spacing:1.223px;-webkit-text-stroke:0.6px #00405c;">Customer</span>
<div style="left:1676.5px;top:913px;width:682px;height:99px;background:#e8e8e8;border-radius:9px;box-shadow:0 0 18px rgba(0,0,0,.24);"></div>
<div style="left:2312.5px;top:913px;width:46px;height:99px;background:#0e819a;border-radius:0 8px 8px 0;"></div>
<svg style="left:2316.7px;top:938px;" width="40.0" height="40.0" viewBox="0 0 40 40" fill="none"><path d="M16.21,30.58 L16.62,33.40 L15.93,33.35 L15.25,33.22 L14.61,32.80 L14.18,31.50 L13.89,30.03 L13.48,29.44 L12.99,29.19 L12.49,28.99 L11.99,28.78 L11.50,28.57 L10.99,28.39 L10.34,28.42 L9.21,29.12 L7.90,29.89 L7.08,29.85 L6.48,29.48 L5.96,29.03 L5.46,28.54 L5.00,28.02 L4.61,27.45 L4.47,26.70 L5.07,25.48 L5.91,24.23 L6.04,23.52 L5.87,23.00 L5.66,22.50 L5.45,22.01 L5.25,21.51 L5.02,21.02 L4.54,20.58 L3.24,20.28 L1.78,19.90 L1.22,19.29 L1.06,18.61 L1.01,17.92 L1.00,17.22 L1.05,16.53 L1.18,15.85 L1.60,15.21 L2.90,14.78 L4.37,14.49 L4.96,14.08 L5.21,13.59 L5.41,13.09 L5.62,12.59 L5.83,12.10 L6.01,11.59 L5.98,10.94 L5.28,9.81 L4.51,8.50 L4.55,7.68 L4.92,7.08 L5.37,6.56 L5.86,6.06 L6.38,5.60 L6.95,5.21 L7.70,5.07 L8.92,5.67 L10.17,6.51 L10.88,6.64 L11.40,6.47 L11.90,6.26 L12.39,6.05 L12.89,5.85 L13.38,5.62 L13.82,5.14 L14.12,3.84 L14.50,2.38 L15.11,1.82 L15.79,1.66 L16.48,1.61 L17.18,1.60 L17.87,1.65 L18.55,1.78 L19.19,2.20 L19.62,3.50 L19.91,4.97 L20.32,5.56 L20.81,5.81 L21.31,6.01 L21.81,6.22 L22.30,6.43 L22.81,6.61 L23.46,6.58 L24.59,5.88 L25.90,5.11 L26.72,5.15 L27.32,5.52 L27.84,5.97 L28.34,6.46 L28.80,6.98 L29.19,7.55 L29.33,8.30 L28.73,9.52 L27.89,10.77 L27.76,11.48 L27.93,12.00 L28.14,12.50 L28.35,12.99 L28.55,13.49 L28.78,13.98 L29.26,14.42 L30.56,14.72 L32.02,15.10 L32.58,15.71 L32.74,16.39 L32.79,17.08 L32.80,17.78 L32.75,18.47 L32.62,19.15 L30.19,19.84" stroke="#fff" stroke-width="2.8" stroke-linejoin="round" stroke-linecap="round"/><circle cx="16.9" cy="17.5" r="5" stroke="#fff" stroke-width="2.8"/><path d="M24.6,25.9H36.6 M24.6,30.8H36.6 M24.6,35.4H36.6" stroke="#fff" stroke-width="2.7" stroke-linecap="round"/></svg>
<span class="t" style="left:1716.93px;top:942px;font-size:27.62px;line-height:31px;color:#00405c;letter-spacing:1.199px;-webkit-text-stroke:0.6px #00405c;">Date Created</span>
<div style="left:1676.5px;top:1043px;width:682px;height:99px;background:#e8e8e8;border-radius:9px;box-shadow:0 0 18px rgba(0,0,0,.24);"></div>
<div style="left:2312.5px;top:1043px;width:46px;height:99px;background:#0e819a;border-radius:0 8px 8px 0;"></div>
<svg style="left:2316.7px;top:1068px;" width="40.0" height="40.0" viewBox="0 0 40 40" fill="none"><path d="M16.21,30.58 L16.62,33.40 L15.93,33.35 L15.25,33.22 L14.61,32.80 L14.18,31.50 L13.89,30.03 L13.48,29.44 L12.99,29.19 L12.49,28.99 L11.99,28.78 L11.50,28.57 L10.99,28.39 L10.34,28.42 L9.21,29.12 L7.90,29.89 L7.08,29.85 L6.48,29.48 L5.96,29.03 L5.46,28.54 L5.00,28.02 L4.61,27.45 L4.47,26.70 L5.07,25.48 L5.91,24.23 L6.04,23.52 L5.87,23.00 L5.66,22.50 L5.45,22.01 L5.25,21.51 L5.02,21.02 L4.54,20.58 L3.24,20.28 L1.78,19.90 L1.22,19.29 L1.06,18.61 L1.01,17.92 L1.00,17.22 L1.05,16.53 L1.18,15.85 L1.60,15.21 L2.90,14.78 L4.37,14.49 L4.96,14.08 L5.21,13.59 L5.41,13.09 L5.62,12.59 L5.83,12.10 L6.01,11.59 L5.98,10.94 L5.28,9.81 L4.51,8.50 L4.55,7.68 L4.92,7.08 L5.37,6.56 L5.86,6.06 L6.38,5.60 L6.95,5.21 L7.70,5.07 L8.92,5.67 L10.17,6.51 L10.88,6.64 L11.40,6.47 L11.90,6.26 L12.39,6.05 L12.89,5.85 L13.38,5.62 L13.82,5.14 L14.12,3.84 L14.50,2.38 L15.11,1.82 L15.79,1.66 L16.48,1.61 L17.18,1.60 L17.87,1.65 L18.55,1.78 L19.19,2.20 L19.62,3.50 L19.91,4.97 L20.32,5.56 L20.81,5.81 L21.31,6.01 L21.81,6.22 L22.30,6.43 L22.81,6.61 L23.46,6.58 L24.59,5.88 L25.90,5.11 L26.72,5.15 L27.32,5.52 L27.84,5.97 L28.34,6.46 L28.80,6.98 L29.19,7.55 L29.33,8.30 L28.73,9.52 L27.89,10.77 L27.76,11.48 L27.93,12.00 L28.14,12.50 L28.35,12.99 L28.55,13.49 L28.78,13.98 L29.26,14.42 L30.56,14.72 L32.02,15.10 L32.58,15.71 L32.74,16.39 L32.79,17.08 L32.80,17.78 L32.75,18.47 L32.62,19.15 L30.19,19.84" stroke="#fff" stroke-width="2.8" stroke-linejoin="round" stroke-linecap="round"/><circle cx="16.9" cy="17.5" r="5" stroke="#fff" stroke-width="2.8"/><path d="M24.6,25.9H36.6 M24.6,30.8H36.6 M24.6,35.4H36.6" stroke="#fff" stroke-width="2.7" stroke-linecap="round"/></svg>
<span class="t" style="left:1717.80px;top:1072px;font-size:27.62px;line-height:31px;color:#00405c;letter-spacing:1.023px;-webkit-text-stroke:0.6px #00405c;">Created By</span>
<div style="left:2426.5px;top:653px;width:685.5px;height:99px;background:#fff;border-radius:9px;box-shadow:0 0 18px rgba(0,0,0,.24);"></div>
<span class="t" style="left:2466.93px;top:682px;font-size:27.62px;line-height:31px;color:#00405c;letter-spacing:1.314px;-webkit-text-stroke:0.6px #00405c;">Email</span>
<div style="left:2426.5px;top:783px;width:685.5px;height:99px;background:#fff;border-radius:9px;box-shadow:0 0 18px rgba(0,0,0,.24);"></div>
<span class="t" style="left:2467.70px;top:812px;font-size:27.47px;line-height:31px;color:#00405c;letter-spacing:1.768px;-webkit-text-stroke:0.7px #00405c;">BBbb<span style="display:inline-block;letter-spacing:0;width:15.28px;margin-left:-3.66px;clip-path:polygon(0 0,15.28px 0,15.28px 22.05px,9.94px 22.05px,9.94px 26px,6.31px 26px,6.31px 22.05px,0 22.05px);">1</span><span style="display:inline-block;letter-spacing:0;width:15.28px;margin-left:-3.53px;clip-path:polygon(0 0,15.28px 0,15.28px 22.05px,9.94px 22.05px,9.94px 26px,6.31px 26px,6.31px 22.05px,0 22.05px);">1</span><span style="display:inline-block;letter-spacing:0;width:15.28px;margin-left:-3.53px;clip-path:polygon(0 0,15.28px 0,15.28px 22.05px,9.94px 22.05px,9.94px 26px,6.31px 26px,6.31px 22.05px,0 22.05px);">1</span><span style="display:inline-block;letter-spacing:0;width:15.28px;margin-left:-3.53px;clip-path:polygon(0 0,15.28px 0,15.28px 22.05px,9.94px 22.05px,9.94px 26px,6.31px 26px,6.31px 22.05px,0 22.05px);">1</span><span style="display:inline-block;letter-spacing:0;width:15.28px;margin-left:-3.53px;clip-path:polygon(0 0,15.28px 0,15.28px 22.05px,9.94px 22.05px,9.94px 26px,6.31px 26px,6.31px 22.05px,0 22.05px);">1</span></span>
<div style="left:2426.5px;top:913px;width:685.5px;height:99px;background:#e8e8e8;border-radius:9px;box-shadow:0 0 18px rgba(0,0,0,.24);"></div>
<div style="left:3066.0px;top:913px;width:46px;height:99px;background:#0e819a;border-radius:0 8px 8px 0;"></div>
<svg style="left:3070.2px;top:938px;" width="40.0" height="40.0" viewBox="0 0 40 40" fill="none"><path d="M16.21,30.58 L16.62,33.40 L15.93,33.35 L15.25,33.22 L14.61,32.80 L14.18,31.50 L13.89,30.03 L13.48,29.44 L12.99,29.19 L12.49,28.99 L11.99,28.78 L11.50,28.57 L10.99,28.39 L10.34,28.42 L9.21,29.12 L7.90,29.89 L7.08,29.85 L6.48,29.48 L5.96,29.03 L5.46,28.54 L5.00,28.02 L4.61,27.45 L4.47,26.70 L5.07,25.48 L5.91,24.23 L6.04,23.52 L5.87,23.00 L5.66,22.50 L5.45,22.01 L5.25,21.51 L5.02,21.02 L4.54,20.58 L3.24,20.28 L1.78,19.90 L1.22,19.29 L1.06,18.61 L1.01,17.92 L1.00,17.22 L1.05,16.53 L1.18,15.85 L1.60,15.21 L2.90,14.78 L4.37,14.49 L4.96,14.08 L5.21,13.59 L5.41,13.09 L5.62,12.59 L5.83,12.10 L6.01,11.59 L5.98,10.94 L5.28,9.81 L4.51,8.50 L4.55,7.68 L4.92,7.08 L5.37,6.56 L5.86,6.06 L6.38,5.60 L6.95,5.21 L7.70,5.07 L8.92,5.67 L10.17,6.51 L10.88,6.64 L11.40,6.47 L11.90,6.26 L12.39,6.05 L12.89,5.85 L13.38,5.62 L13.82,5.14 L14.12,3.84 L14.50,2.38 L15.11,1.82 L15.79,1.66 L16.48,1.61 L17.18,1.60 L17.87,1.65 L18.55,1.78 L19.19,2.20 L19.62,3.50 L19.91,4.97 L20.32,5.56 L20.81,5.81 L21.31,6.01 L21.81,6.22 L22.30,6.43 L22.81,6.61 L23.46,6.58 L24.59,5.88 L25.90,5.11 L26.72,5.15 L27.32,5.52 L27.84,5.97 L28.34,6.46 L28.80,6.98 L29.19,7.55 L29.33,8.30 L28.73,9.52 L27.89,10.77 L27.76,11.48 L27.93,12.00 L28.14,12.50 L28.35,12.99 L28.55,13.49 L28.78,13.98 L29.26,14.42 L30.56,14.72 L32.02,15.10 L32.58,15.71 L32.74,16.39 L32.79,17.08 L32.80,17.78 L32.75,18.47 L32.62,19.15 L30.19,19.84" stroke="#fff" stroke-width="2.8" stroke-linejoin="round" stroke-linecap="round"/><circle cx="16.9" cy="17.5" r="5" stroke="#fff" stroke-width="2.8"/><path d="M24.6,25.9H36.6 M24.6,30.8H36.6 M24.6,35.4H36.6" stroke="#fff" stroke-width="2.7" stroke-linecap="round"/></svg>
<span class="t" style="left:2466.93px;top:942px;font-size:27.62px;line-height:31px;color:#00405c;letter-spacing:1.433px;-webkit-text-stroke:0.6px #00405c;">Modified By</span>
<div style="left:2426.5px;top:1043px;width:685.5px;height:99px;background:#e8e8e8;border-radius:9px;box-shadow:0 0 18px rgba(0,0,0,.24);"></div>
<div style="left:3066.0px;top:1043px;width:46px;height:99px;background:#0e819a;border-radius:0 8px 8px 0;"></div>
<svg style="left:3070.2px;top:1068px;" width="40.0" height="40.0" viewBox="0 0 40 40" fill="none"><path d="M16.21,30.58 L16.62,33.40 L15.93,33.35 L15.25,33.22 L14.61,32.80 L14.18,31.50 L13.89,30.03 L13.48,29.44 L12.99,29.19 L12.49,28.99 L11.99,28.78 L11.50,28.57 L10.99,28.39 L10.34,28.42 L9.21,29.12 L7.90,29.89 L7.08,29.85 L6.48,29.48 L5.96,29.03 L5.46,28.54 L5.00,28.02 L4.61,27.45 L4.47,26.70 L5.07,25.48 L5.91,24.23 L6.04,23.52 L5.87,23.00 L5.66,22.50 L5.45,22.01 L5.25,21.51 L5.02,21.02 L4.54,20.58 L3.24,20.28 L1.78,19.90 L1.22,19.29 L1.06,18.61 L1.01,17.92 L1.00,17.22 L1.05,16.53 L1.18,15.85 L1.60,15.21 L2.90,14.78 L4.37,14.49 L4.96,14.08 L5.21,13.59 L5.41,13.09 L5.62,12.59 L5.83,12.10 L6.01,11.59 L5.98,10.94 L5.28,9.81 L4.51,8.50 L4.55,7.68 L4.92,7.08 L5.37,6.56 L5.86,6.06 L6.38,5.60 L6.95,5.21 L7.70,5.07 L8.92,5.67 L10.17,6.51 L10.88,6.64 L11.40,6.47 L11.90,6.26 L12.39,6.05 L12.89,5.85 L13.38,5.62 L13.82,5.14 L14.12,3.84 L14.50,2.38 L15.11,1.82 L15.79,1.66 L16.48,1.61 L17.18,1.60 L17.87,1.65 L18.55,1.78 L19.19,2.20 L19.62,3.50 L19.91,4.97 L20.32,5.56 L20.81,5.81 L21.31,6.01 L21.81,6.22 L22.30,6.43 L22.81,6.61 L23.46,6.58 L24.59,5.88 L25.90,5.11 L26.72,5.15 L27.32,5.52 L27.84,5.97 L28.34,6.46 L28.80,6.98 L29.19,7.55 L29.33,8.30 L28.73,9.52 L27.89,10.77 L27.76,11.48 L27.93,12.00 L28.14,12.50 L28.35,12.99 L28.55,13.49 L28.78,13.98 L29.26,14.42 L30.56,14.72 L32.02,15.10 L32.58,15.71 L32.74,16.39 L32.79,17.08 L32.80,17.78 L32.75,18.47 L32.62,19.15 L30.19,19.84" stroke="#fff" stroke-width="2.8" stroke-linejoin="round" stroke-linecap="round"/><circle cx="16.9" cy="17.5" r="5" stroke="#fff" stroke-width="2.8"/><path d="M24.6,25.9H36.6 M24.6,30.8H36.6 M24.6,35.4H36.6" stroke="#fff" stroke-width="2.7" stroke-linecap="round"/></svg>
<span class="t" style="left:2466.93px;top:1072px;font-size:27.62px;line-height:31px;color:#00405c;letter-spacing:1.446px;-webkit-text-stroke:0.6px #00405c;">Date Modified</span>
<svg style="left:856.5px;top:1315.5px;" width="2324.3" height="786.5" viewBox="-2 -2 2324.3 786.5" fill="none"><rect x="0" y="0" width="2320.3" height="782.5" rx="9" fill="#e8e8e8" stroke="#959595" stroke-width="1.7" stroke-dasharray="7.4 4.4"/></svg>
<div style="left:893px;top:1412.5px;width:2251.5px;height:637.5px;background:#fff;border-radius:11px;"></div>
<svg style="left:2892px;top:1340.5px;" width="52" height="40" viewBox="0 0 52 40" fill="none"><rect x="3.8" y="3.8" width="43.4" height="31.4" rx="4" stroke="#0e819a" stroke-width="3.2"/><path d="M17.6,4 V35 M34.6,4 V35" stroke="#0e819a" stroke-width="3.2"/></svg>
<span class="t" style="left:2952.43px;top:1344px;font-size:26.45px;line-height:30px;color:#0e819a;letter-spacing:2.915px;-webkit-text-stroke:0.8px #0e819a;">Layout area</span>
<div style="left:2954.2px;top:1369.7px;width:167.8px;height:2.5px;background:#0e819a;"></div>
<div style="left:1642.25px;top:1450.5px;width:1.7px;height:500px;background:repeating-linear-gradient(to bottom,#bcbcbc 0,#bcbcbc 6.2px,transparent 6.2px,transparent 10.4px);"></div>
<div style="left:2391.7500000000005px;top:1450.5px;width:1.7px;height:500px;background:repeating-linear-gradient(to bottom,#bcbcbc 0,#bcbcbc 6.2px,transparent 6.2px,transparent 10.4px);"></div>
<div style="left:925.5px;top:1480px;width:683.5px;height:300px;background:#fff;border-radius:9px;box-shadow:0 0 18px rgba(0,0,0,.24);"></div>
<div style="left:925.5px;top:1480px;width:683.5px;height:76.5px;background:#0e819a;border-radius:9px 9px 0 0;"></div>
<span class="t" style="left:975.33px;top:1501px;font-size:29.94px;line-height:33px;color:#fff;letter-spacing:-0.244px;">Table</span>
<div style="left:1677px;top:1480px;width:681.5px;height:300px;background:#fff;border-radius:9px;box-shadow:0 0 18px rgba(0,0,0,.24);"></div>
<span class="t" style="left:1716.41px;top:1509px;font-size:27.91px;line-height:31px;color:#00405c;letter-spacing:1.599px;-webkit-text-stroke:0.6px #00405c;">Boolean2507</span>
<div style="left:2426.3px;top:1480px;width:685.7px;height:300px;background:#fff;border-radius:9px;box-shadow:0 0 18px rgba(0,0,0,.24);"></div>
<span class="t" style="left:2466.61px;top:1509px;font-size:27.91px;line-height:31px;color:#00405c;letter-spacing:1.113px;-webkit-text-stroke:0.6px #00405c;">Float</span>
</div></div>
<div style="left:845px;top:1594.2px;width:2349px;height:1.7px;background:#b9b9b9;"></div>
<svg style="left:866px;top:1615px;" width="50" height="52" viewBox="0 0 50 52" fill="none"><path d="M6.2,25.2 A17.3,17.3 0 1 1 23,46.2" stroke="#00405c" stroke-width="3.3" stroke-linecap="round"/><path d="M19.4,5.3 H29.4 M39,9 L44,14.4 M37.2,15.6 L41.2,11.8 M17.2,23 L24.6,29.6 M4.2,33.2 H15.6 M8.6,39.8 H15.6 M13,46.4 H15.6" stroke="#00405c" stroke-width="3.3" stroke-linecap="round"/></svg>
<span class="t" style="left:926.44px;top:1626px;font-size:25.58px;line-height:28px;color:#00405c;letter-spacing:1.414px;-webkit-text-stroke:0.6px #00405c;">Saved: Just now</span>
<svg style="left:3010px;top:1624px;" width="40" height="34" viewBox="0 0 40 34" fill="none"><path d="M4,17 C10,7.4 15,4.6 19.6,4.6 C24.2,4.6 29.2,7.4 35.2,17 C29.2,26.6 24.2,29.4 19.6,29.4 C15,29.4 10,26.6 4,17Z" stroke="#0e819a" stroke-width="2.8" stroke-linejoin="round"/><circle cx="19.5" cy="17" r="5.5" stroke="#0e819a" stroke-width="2.8"/></svg>
<span class="t" style="left:3059.60px;top:1626px;font-size:25.58px;line-height:28px;color:#0e819a;letter-spacing:2.009px;-webkit-text-stroke:0.6px #0e819a;">Preview</span>
<div style="left:3059.8px;top:1650.8px;width:103.2px;height:2.5px;background:#0e819a;"></div>
<section aria-label="Available fields">
<div style="left:3194px;top:475.5px;width:2.2px;height:1211px;background:#8e8e8e;"></div>
<div style="left:3196px;top:484px;width:293.5px;height:92.5px;background:#00405c;border-radius:11px 11px 0 0;"></div>
<div style="left:3489.5px;top:500.7px;width:293.5px;height:73px;background:#dff2f6;border-radius:4px 11px 0 0;"></div>
<div style="left:3196px;top:573px;width:587px;height:3.6px;background:#00405c;"></div>
<span class="t" style="left:3298.46px;top:502px;font-size:26.74px;line-height:30px;color:#fff;letter-spacing:2.904px;-webkit-text-stroke:1.0px #fff;">Fields</span>
<span class="t" style="left:3569.75px;top:518px;font-size:27.47px;line-height:31px;color:#00405c;letter-spacing:2.276px;-webkit-text-stroke:0.5px #00405c;">Elements</span>
<span class="t" style="left:3217.97px;top:613px;font-size:30.45px;line-height:34px;color:#00405c;letter-spacing:1.549px;-webkit-text-stroke:1.05px #00405c;">Available fields</span>
<span class="t" style="left:3216.05px;top:676px;font-size:28.49px;line-height:32px;color:#4a4a4a;letter-spacing:0.523px;">Configure how your end users</span>
<span class="t" style="left:3216.29px;top:729px;font-size:28.49px;line-height:32px;color:#4a4a4a;letter-spacing:0.637px;">experience the layout of this collection.</span>
<svg style="left:3215.5px;top:790.8px;" width="549.3" height="285.6" viewBox="-2 -2 549.3 285.6" fill="none"><rect x="0" y="0" width="545.3" height="281.6" rx="0" fill="#f6f6f6" stroke="#bdbdbd" stroke-width="1.7" stroke-dasharray="7.4 4.4"/></svg>
<span class="t" style="left:3323.19px;top:866px;font-size:21.22px;line-height:23px;color:#4a4a4a;letter-spacing:0.173px;">If you don’t want a property in your</span>
<span class="t" style="left:3312.45px;top:903px;font-size:21.22px;line-height:23px;color:#4a4a4a;letter-spacing:0.133px;">fieldset, you can remove it by clicking</span>
<span class="t" style="left:3320.78px;top:940px;font-size:21.22px;line-height:23px;color:#4a4a4a;letter-spacing:0.200px;">the </span>
<span class="t" style="left:3356.01px;top:940px;font-size:21.22px;line-height:23px;color:#333;font-weight:700;">X</span>
<span class="t" style="left:3375.78px;top:940px;font-size:21.22px;line-height:23px;color:#4a4a4a;letter-spacing:0.224px;">icon or by dragging it into this</span>
<span class="t" style="left:3469.30px;top:977px;font-size:21.22px;line-height:23px;color:#4a4a4a;letter-spacing:0.685px;">field</span>
<div style="left:3217.2px;top:1104.2px;width:545.8px;height:1.6px;background:#e2e2e2;"></div>
<span class="t" style="left:3216.28px;top:1125px;font-size:24.71px;line-height:27px;color:#4a4a4a;letter-spacing:0.372px;">Search for a field</span>
<div style="left:3217.2px;top:1155.8px;width:545.8px;height:64.6px;background:#e0e0e0;border:2px solid #737373;border-radius:9px;"></div>
<svg style="left:3237.4px;top:1175.6px;" width="27" height="27" viewBox="0 0 26 26" fill="none"><circle cx="10.5" cy="10.5" r="8.2" stroke="#3c3c3c" stroke-width="2.7"/><path d="M16.6,16.6 L24.3,24.3" stroke="#3c3c3c" stroke-width="2.7" stroke-linecap="round"/></svg>
<span class="t" style="left:3287.84px;top:1171px;font-size:28.78px;line-height:32px;color:#868686;letter-spacing:0.419px;">Enter fieldname</span>
</section>
</main>
</body></html>
